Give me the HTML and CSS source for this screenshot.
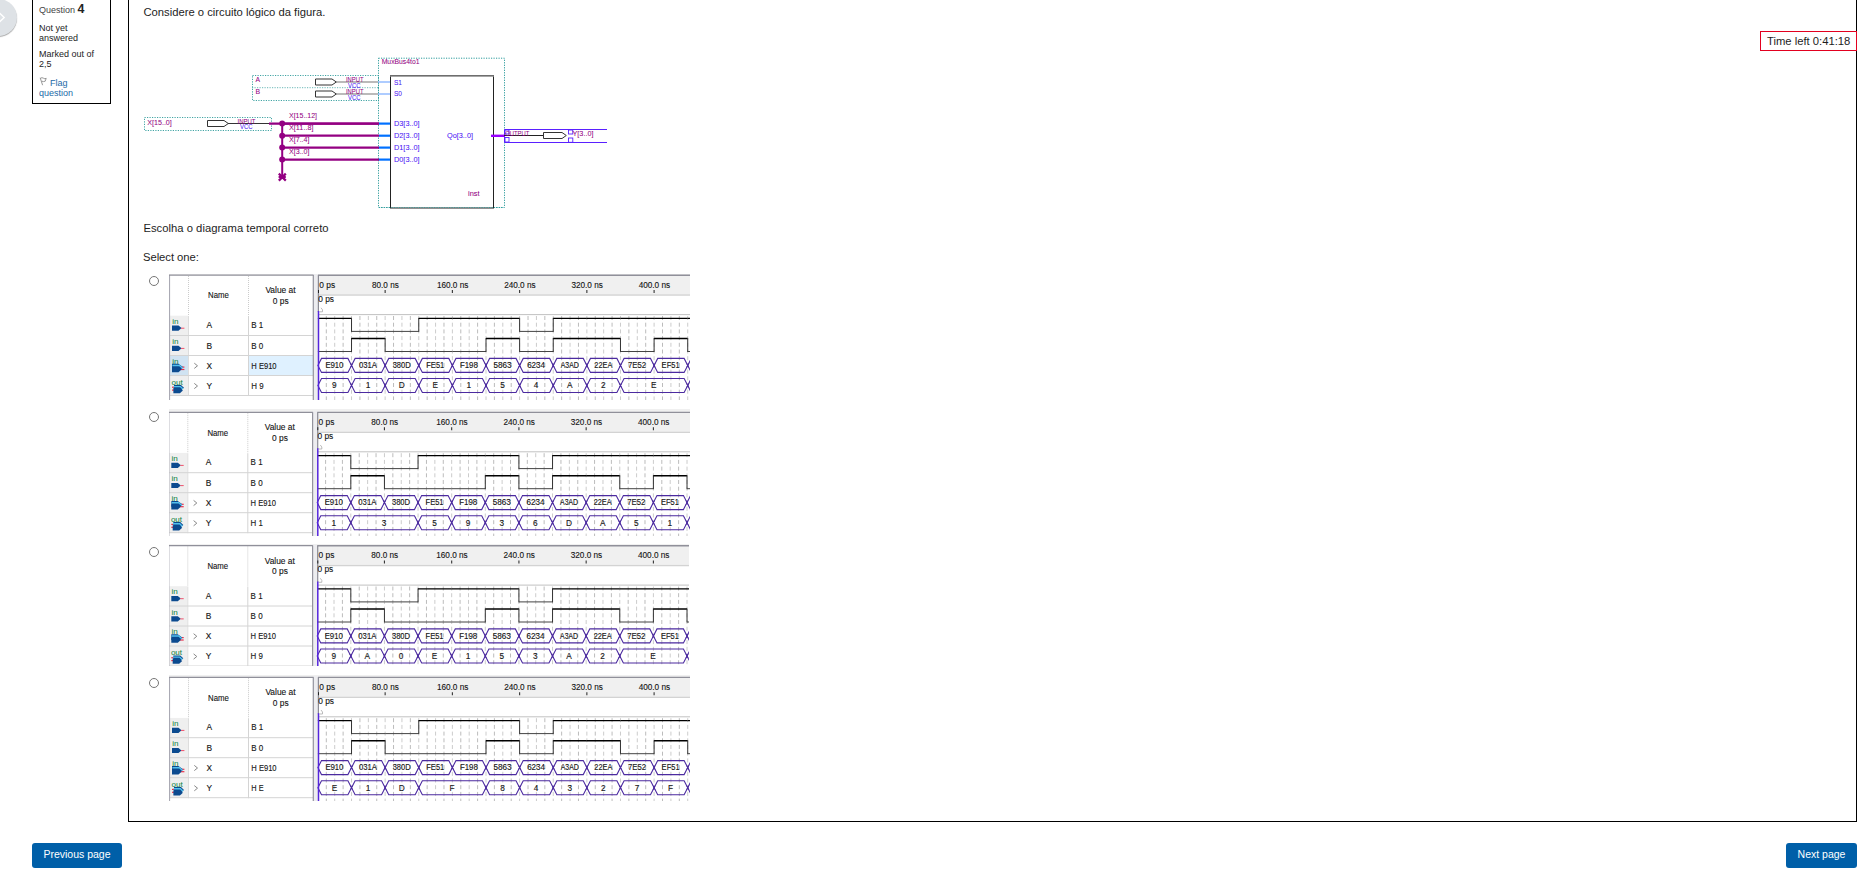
FILE: index.html
```html
<!DOCTYPE html>
<html lang="pt">
<head>
<meta charset="utf-8">
<title>Question 4</title>
<link rel="stylesheet" href="styles.css">
</head>
<body>
<button class="drawer" aria-label="Open drawer"><svg width="18" height="37" viewBox="0 0 18 37"><path d="M-1 13.5 4.2 18.5 -1 23.5" fill="none" stroke="#fff" stroke-width="1.4"/></svg></button>
<div class="timer">Time left 0:41:18</div>
<div class="page">
  <div class="question">
    <aside class="info">
      <h3 class="number">Question <b>4</b></h3>
      <p class="state">Not yet answered</p>
      <p class="grade">Marked out of 2,5</p>
      <a class="flag"><svg width="9" height="9" viewBox="0 0 9 9"><path d="M1.2.8 3.6 8.2M1.5 1.2Q3 .2 4.4 1.2T7.2 1.3L6.2 4.2Q4.5 5 2.8 4.2" fill="none" stroke="#8b8b8b" stroke-width=".9"/></svg> Flag<br>question</a>
    </aside>
    <main class="content">
      <p class="prompt">Considere o circuito lógico da figura.</p>
      <svg class="circuit" id="circuit" width="464" height="160" viewBox="143 52 464 160"></svg>
      <p class="choose">Escolha o diagrama temporal correto</p>
      <p class="select">Select one:</p>
      <div class="answers" id="answers"></div>
    </main>
  </div>
  <nav class="nav"><button class="btn prev">Previous page</button><button class="btn next">Next page</button></nav>
</div>
<script src="main.js"></script>
</body>
</html>
```
FILE: styles.css
```css
* { box-sizing: border-box; }
body { margin: 0; height: 888px; overflow: hidden; background: #fff; color: #1d1d1d; font-family: "Liberation Sans", Arial, sans-serif; font-size: 11.25px; }
p, h3 { margin: 0; font-weight: normal; }
.page { padding: 0 2px 0 32px; }
.question { display: flex; align-items: flex-start; gap: 17px; }
.info { width: 79px; height: 104px; padding: 2px 6px 0; border: 1px solid #000; border-top: 0; font-size: 9px; line-height: 10px; }
.number { font-size: 9px; line-height: 15px; color: #444; }
.number b { font-size: 12.4px; color: #222; }
.state { margin-top: 5px; }
.grade { margin-top: 6px; }
.flag { display: block; margin-top: 8px; color: #1b6aa8; }
.flag svg { margin-right: -.5px; }
.content { flex: 1; height: 822px; padding: 0 0 0 14px; border: 1px solid #000; border-top: 0; }
.prompt, .choose { text-indent: .4px; }
.prompt { height: 52px; padding-top: 5px; line-height: 14px; }
.circuit { display: block; }
.choose { height: 29px; padding-top: 9px; line-height: 14px; letter-spacing: .02px; }
.select { height: 33px; padding-top: 9px; line-height: 14px; letter-spacing: -.05px; }
.answers { display: flex; flex-direction: column; }
.answer { display: flex; align-items: flex-start; }
.answer svg { display: block; }
.radio { appearance: none; width: 10px; height: 10px; margin: 3px 10px 0 6px; border: 1px solid #767676; border-radius: 50%; background: #fff; }
.answer:first-child .radio { margin-top: 2px; }
.nav { display: flex; justify-content: space-between; padding-top: 21px; }
.btn { height: 25px; padding: 0 0 3px; border: 0; border-radius: 3px; background: #005fa8; color: #fff; font: 10.5px "Liberation Sans", Arial, sans-serif; }
.prev { width: 90px; }
.next { width: 71px; }
.timer { position: absolute; top: 31px; left: 1760px; width: 97px; height: 20px; padding-left: 6px; border: 1px solid #e2001f; background: #fff; line-height: 19px; font-size: 11.25px; white-space: nowrap; }
.drawer { position: absolute; left: -20px; top: -1px; width: 37px; height: 37px; padding: 0 0 0 20px; border: 0; border-radius: 50%; background: #dee2e6; box-shadow: 0 1px 1px rgba(0,0,0,.35); overflow: hidden; }
.drawer svg { display: block; }
text { font-family: "Liberation Sans", Arial, sans-serif; font-size: 8.3px; fill: #141414; stroke: #141414; stroke-width: .12px; }
.mag { fill: #930082; stroke: #930082; stroke-width: .05px; font-size: 8px; }
.blu { fill: #4a14f5; stroke: #4a14f5; stroke-width: .05px; font-size: 8px; }
.io { fill: #0c8040; stroke: none; font-size: 8px; }
```
FILE: main.js
```js
const line = (x1, y1, x2, y2, c, w = 1, extra = '') => `<line x1="${x1}" y1="${y1}" x2="${x2}" y2="${y2}" stroke="${c}" stroke-width="${w}" ${extra}/>`;
const rect = (x, y, w, h, f, extra = '') => `<rect x="${x}" y="${y}" width="${w}" height="${h}" fill="${f}" ${extra}/>`;
const text = (x, y, s, w, cls = '') => `<text x="${x}" y="${y}" class="${cls}"${w ? ` textLength="${w}" lengthAdjust="spacingAndGlyphs"` : ''}>${s}</text>`;
const mid = (x, y, s, w) => w ? text(x - w / 2, y, s, w) : `<text x="${x}" y="${y}" text-anchor="middle">${s}</text>`;

function circuit() {
  const P = '#930082', B = '#5a20ff', T = '#2b9a9a';
  const dots = 'stroke-dasharray="1.2 1.3"';
  const pin = (x, y, w) => `<path d="M${x} ${y - 3}h${w}l4.3 3-4.3 3h-${w}z" fill="#fff" stroke="#333"/>`;
  let s = '';
  s += rect(378.5, 58.2, 126, 149.3, 'none', `stroke="${T}" stroke-width="1" ${dots}`);
  s += rect(252.5, 75.5, 126, 25, 'none', `stroke="${T}" stroke-width=".9" ${dots}`) + line(252, 87.7, 378, 87.7, T, .7, dots);
  s += rect(144.5, 117.5, 127, 13, 'none', `stroke="${T}" stroke-width=".9" ${dots}`);
  for (const [y, n] of [[82, 'A'], [94, 'B']]) {
    s += text(255.5, y + .4, n, 4.6, 'mag') + pin(315.5, y, 16.5);
    s += line(336, y, 378, y, '#777', 1.2) + line(378, y, 390, y, '#8bb6ff', 1.4);
    s += text(346, y + .4, 'INPUT', 17.5, 'mag') + text(348, y + 5.6, 'VCC', 12.5, 'blu');
  }
  s += text(147.3, 124.6, 'X[15..0]', 24.5, 'mag') + pin(207.5, 123.5, 16.5) + line(228, 123.5, 271, 123.5, '#333');
  s += text(237.5, 124, 'INPUT', 18, 'mag') + text(240, 129.3, 'VCC', 12.5, 'blu');
  s += line(269, 123.6, 379, 123.6, P, 2.2) + line(282.2, 122, 282.2, 178, P, 2);
  [[123.6, 'X[15..12]', 28], [135.7, 'X[11..8]', 24.5], [147.6, 'X[7..4]', 20.5], [159.6, 'X[3..0]', 20.5]].forEach(([y, n, w], i) => {
    s += line(282, y, 379, y, P, 2.2) + line(379, y, 391, y, '#0070ff', 2.2);
    s += `<circle cx="282.2" cy="${y}" r="3" fill="${P}"/>` + text(289, y - 5.4, n, w, 'mag');
  });
  s += `<path d="M278.8 173.6l7 7M285.8 173.6l-7 7M278.6 177h7.2" stroke="${P}" stroke-width="2.2"/>`;
  s += rect(390.5, 75.5, 103, 132.5, '#fff', 'stroke="#222"') + line(390, 76, 494, 76, '#888', 1.6);
  s += line(379, 207.5, 504, 207.5, T, .8, dots);
  s += text(381.7, 64.4, 'MuxBus4to1', 37.8, 'mag');
  s += text(394, 84.6, 'S1', 8, 'blu') + text(394, 96.4, 'S0', 8, 'blu');
  [3, 2, 1, 0].forEach((n, i) => s += text(394, 126.4 + 12 * i, `D${n}[3..0]`, 25.6, 'blu'));
  s += text(447, 138.3, 'Qo[3..0]', 26, 'blu') + text(468, 196.1, 'inst', 11.5, 'mag');
  s += `<path d="M607 129.5H504.5V142.5H607" fill="none" stroke="${B}"/>`;
  s += line(491, 135.8, 504.5, 135.8, '#9a00ff', 2.4) + line(504, 135.5, 543, 135.5, '#222');
  s += rect(505, 130, 4, 4, 'none', `stroke="${B}" stroke-width=".9"`) + rect(505, 137.5, 4, 4.5, 'none', `stroke="${B}" stroke-width=".9"`);
  s += rect(568.5, 130, 4.3, 4, 'none', `stroke="${B}" stroke-width=".9"`) + rect(568.5, 138, 4.3, 4.3, 'none', `stroke="${B}" stroke-width=".9"`);
  s += text(505.3, 136.2, 'OUTPUT', 24, 'mag') + pin(543.5, 135.5, 18.5) + text(572.5, 136.4, 'Y[3..0]', 21, 'mag');
  return s;
}

const X = ['E910', '031A', '380D', 'FE51', 'F198', '5863', '6234', 'A3AD', '22EA', '7E52', 'EF51'];
const X0 = 317.9, STEP = 33.62;
const at = k => X0 + STEP * k;

function bus(vals, y) {
  let s = '', k = 0;
  for (const [v, n = 1] of vals) {
    const a = at(k), b = at(k + n);
    s += `<path d="M${a + 3.6} ${y}H${b - 3.6}L${b} ${y + 7}L${b - 3.6} ${y + 14}H${a + 3.6}L${a} ${y + 7}Z" fill="none" stroke="#4c2ba0" stroke-width="1.1"/>`;
    s += `<path d="M${b - 1} ${y + 5}l2 4M${b - 1} ${y + 9}l2-4" stroke="#4c2ba0"/>`;
    s += mid((a + b) / 2 - .3, y + 9.9, v, v.length > 1 ? 18 : 0);
    k += n;
  }
  return s + `<path d="M${at(11) + 3.6} ${y}L${at(11)} ${y + 7}L${at(11) + 3.6} ${y + 14}" fill="none" stroke="#4c2ba0" stroke-width="1.1"/>`;
}

function wave(levels, hi) {
  let s = '', prev = levels[0];
  levels.forEach((v, k) => {
    if (v !== prev) s += line(at(k), hi - .5, at(k), hi + 13.5, '#333', 1);
    s += v ? line(at(k), hi, at(k + 1), hi, '#000', 1.4) : line(at(k), hi + 13, at(k + 1), hi + 13, '#444', 1);
    prev = v;
  });
  return s;
}

function icon(kind, y) {
  const pent = (x, yy, c) => `<path d="M${x} ${yy}h6.5l3 2.6-3 2.6h-6.5z" fill="${c}"/>`;
  if (kind === 'in') return text(172.2, y - 2.4, 'in', 6.3, 'io') + pent(172, y - .8, '#0b4a8f') + line(181, y + 1.9, 184.4, y + 1.9, '#f0506a', 1);
  if (kind === 'inbus') return text(172.2, y - 3, 'in', 6.3, 'io') + line(180, y + .4, 184.4, y + .4, '#e8304a', 1.2) + line(180, y + 2.8, 184.4, y + 2.8, '#e8304a', 1.2)
    + `<path d="M172 ${y - 3}h6.5l4.4 3.4-2 2.4h-8.9z" fill="#0b4a8f"/><path d="M172.4 ${y - 1.2}h7l3.2 2.8" fill="none" stroke="#52c0ee" stroke-width="1.4"/>` + pent(172, y + .3, '#0b4a8f');
  return text(171.6, y - 2.2, 'out', 11.2, 'io') + line(172, y + .3, 177, y + .3, '#e8304a', 1.2) + line(172, y + 3.2, 177, y + 3.2, '#e8304a', 1.2)
    + `<path d="M174 ${y - 2}h7l3 2.8-3 2.6h-7z" fill="#0b4a8f"/><path d="M173.6 ${y - .3}h6.8l2.5 2.4" fill="none" stroke="#52c0ee" stroke-width="1.4"/>` + pent(173.4, y + 1.1, '#0b4a8f');
}

function diagram(d) {
  let s = rect(168, 270, 523, 140, '#fff') + rect(168, 270, 523, 5, '#f0f0f0');
  s += rect(169, 315.7, 19, 80, '#efefef');
  if (d.sel) s += rect(169, 355.5, 19, 20, '#d0e3f2') + rect(249, 355.5, 64, 20, '#dff1ff');
  s += line(188.5, 276, 188.5, 316, '#ccc', 1, 'stroke-dasharray="1 1"') + line(248.5, 276, 248.5, 316, '#ccc', 1, 'stroke-dasharray="1 1"');
  s += line(188.5, 316, 188.5, 396, '#ddd') + line(248.5, 316, 248.5, 396, '#d4d4d4');
  for (const y of [335.5, 355.5, 375.5, 395.5]) s += line(169, y, 313, y, '#d4d4d4');
  s += rect(313, 274, 5, 136, '#ededf0') + line(313.3, 275, 313.3, 410, '#93939d', 1.2);
  s += line(169.5, 275, 169.5, 410, '#aaaab4', 1.2) + line(169, 275.2, 313.5, 275.2, '#90909a', 1.2);
  s += mid(218.5, 298.4, 'Name', 20.8) + mid(280.5, 293.2, 'Value at', 30.2) + mid(280.7, 303.9, '0 ps', 15.8);
  [['in', 'A', 'B 1', 12], ['in', 'B', 'B 0', 12], ['inbus', 'X', 'H E910', 25.3], ['out', 'Y', d.h, 12.3]].forEach(([ic, n, v, w], i) => {
    const y = 328.3 + 20.2 * i;
    s += icon(ic, y - 2) + text(206.4, y, n, 5.6) + text(251.3, y, v, w);
    if (i > 1) s += `<path d="M194.3 ${y - 5.5}l3.2 2.6-3.2 2.6" fill="none" stroke="#888" stroke-width="1"/>`;
  });
  s += rect(318, 275, 373, 19, '#f0f0f0') + line(318, 275.2, 691, 275.2, '#90909a', 1.4) + line(318, 295, 691, 295, '#d3d3d3', 1.6);
  s += line(318.4, 275, 318.4, 312, '#8b8b95', 1.2) + line(318, 314.6, 691, 314.6, '#c2c2c2');
  for (let i = 1; i < 45; i++) s += line(X0 + 8.405 * i, 316, X0 + 8.405 * i, 410, i % 2 ? '#bcbcbc' : '#ccc', 1, 'stroke-dasharray="4 2.7"');
  s += text(319.3, 287.9, '0 ps', 15.8) + text(318.2, 301.9, '0 ps', 15.8) + line(318.5, 290, 318.5, 293, '#222');
  for (let i = 1; i < 6; i++) s += mid(385.4 + 67.25 * (i - 1), 287.9, `${80 * i}.0 ns`, i === 1 ? 26.7 : 31.5) + line(at(2 * i), 290, at(2 * i), 293, '#333', 1.1);
  s += `<path d="M319.5 311.8h3v-2l-1.5-2" fill="none" stroke="#aaa" stroke-width=".8"/>`;
  s += wave([1, 0, 0, 1, 1, 1, 0, 1, 1, 1, 1, 1], 318.4) + wave([0, 1, 0, 0, 0, 1, 0, 1, 1, 0, 1, 0], 338.5);
  s += bus(X.map(v => [v]), 358.4) + bus(d.y, 378.5);
  s += line(318.5, 311, 318.5, 410, '#5525dd', 1.5);
  return s;
}

const options = [
  { sel: true, h: 'H 9', height: 126, pad: 9, dy: 0, dx: 0, w: 521, y: [['9'], ['1'], ['D'], ['E'], ['1'], ['5'], ['4'], ['A'], ['2'], ['E', 2]] },
  { h: 'H 1', height: 127, pad: 8, dy: 2.2, dx: .7, w: 521, y: [['1'], ['3', 2], ['5'], ['9'], ['3'], ['6'], ['D'], ['A'], ['5'], ['1']] },
  { h: 'H 9', height: 122, pad: 9, dy: .5, dx: .7, w: 520, y: [['9'], ['A'], ['0'], ['E'], ['1'], ['5'], ['3'], ['A'], ['2'], ['E', 2]] },
  { h: 'H E', height: 126, pad: 0, dy: 1.2, dx: 0, w: 521, y: [['E'], ['1'], ['D'], ['F', 2], ['8'], ['4'], ['3'], ['2'], ['7'], ['F']] }
];
document.getElementById('circuit').innerHTML = circuit();
document.getElementById('answers').innerHTML = options.map(d =>
  `<label class="answer" style="height:${d.height + d.pad}px"><input class="radio" type="radio" name="a"><svg width="${d.w}" height="${d.height}" viewBox="${169 + d.dx} ${274 - d.dy} ${d.w} ${d.height}">${diagram(d)}</svg></label>`).join('');
```
